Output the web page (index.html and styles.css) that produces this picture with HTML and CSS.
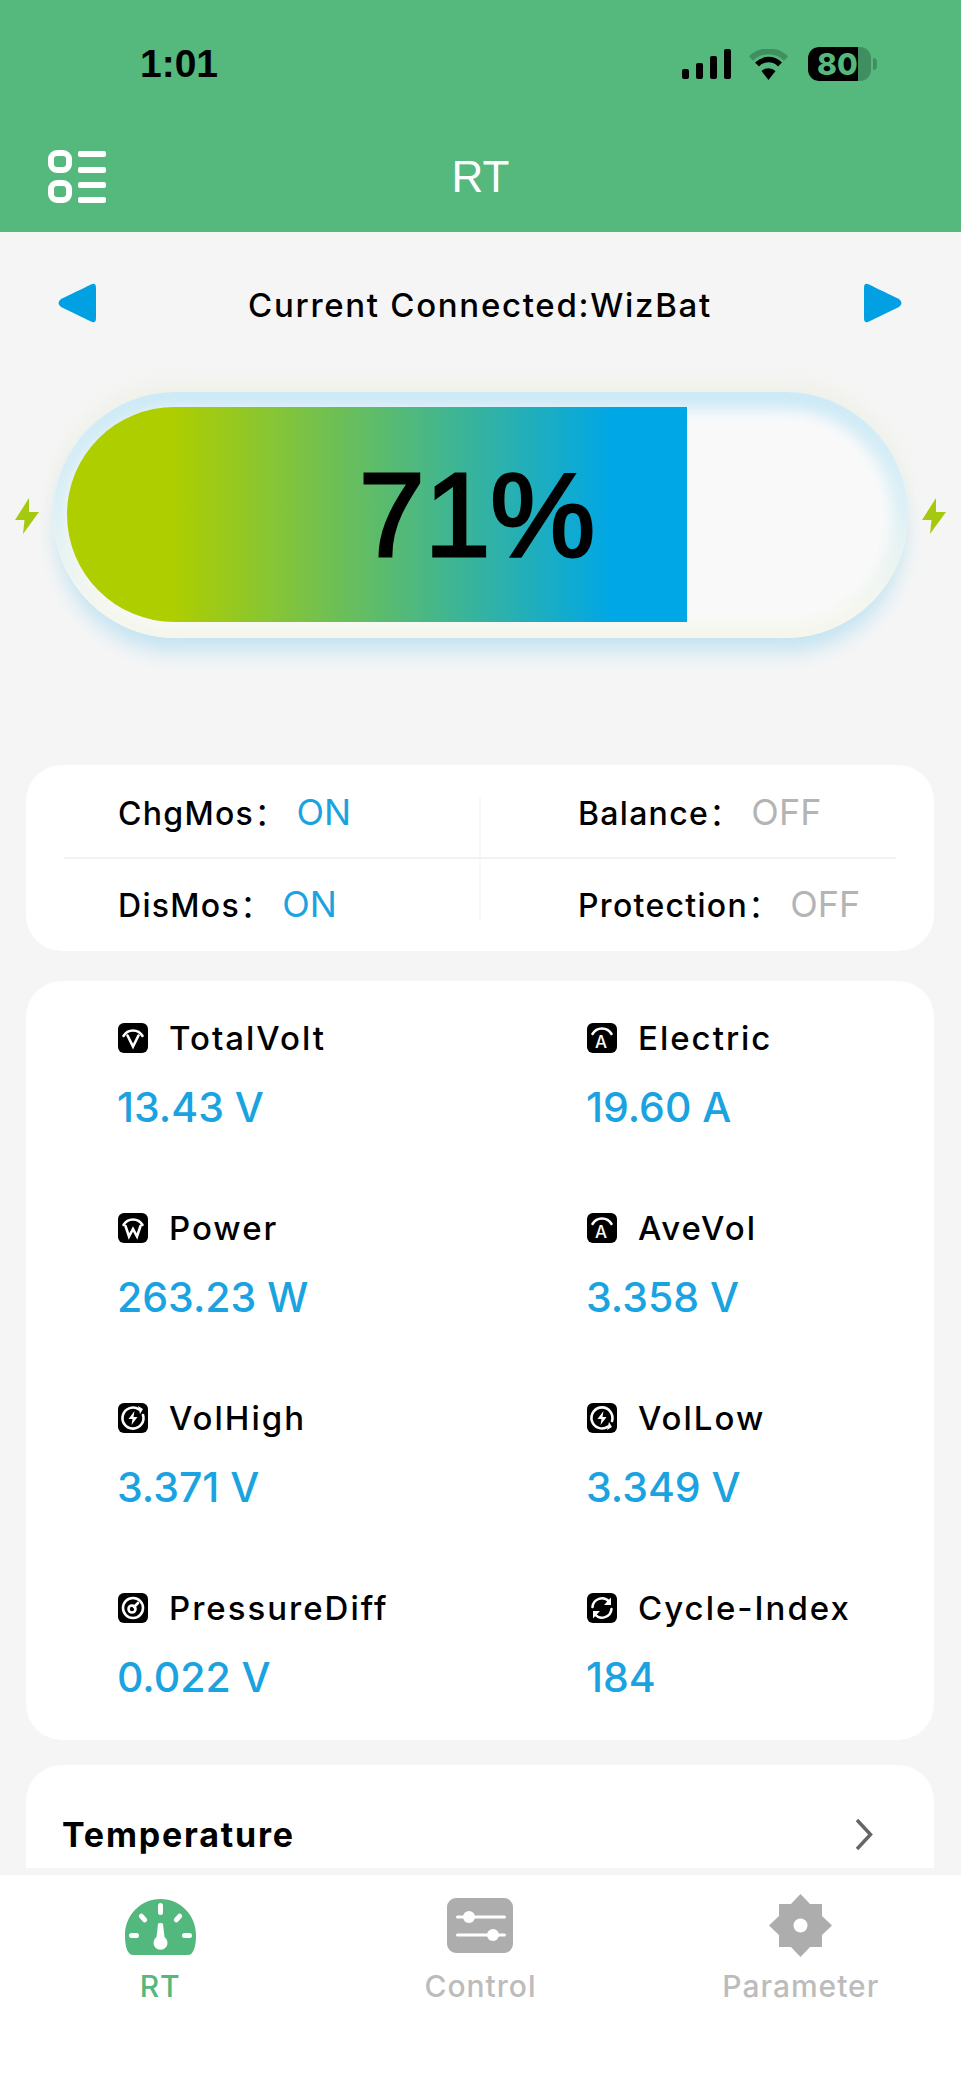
FILE: index.html
```html
<!DOCTYPE html>
<html lang="en">
<head>
<meta charset="utf-8">
<title>RT</title>
<link rel="stylesheet" href="styles.css">
</head>
<body>
<div class="app">
  <header class="header">
    <div class="status">
      <span class="time">1:01</span>
      <div class="status-icons">
        <svg class="ic-signal" viewBox="0 0 49 30"><rect x="0" y="20" width="7" height="10" rx="2"/><rect x="14" y="14" width="7" height="16" rx="2"/><rect x="28" y="7" width="7" height="23" rx="2"/><rect x="42" y="0" width="7" height="30" rx="2"/></svg>
        <svg class="ic-wifi" viewBox="0 0 41 31"><path d="M3 9.500 A25 25 0 0 1 38 9.500" fill="none" stroke="#3f8f60" stroke-width="6"/><path d="M9 15.500 A16 16 0 0 1 32 15.500" fill="none" stroke="#000" stroke-width="5.500"/><path d="M13.500 22 L20.500 31 L27.500 22 A10 10 0 0 0 13.500 22Z" fill="#000"/></svg>
        <div class="batt"><div class="batt-body"><span class="batt-fill"><span class="batt-num">80</span></span></div><span class="batt-nub"></span></div>
      </div>
    </div>
    <div class="nav">
      <svg class="ic-menu" viewBox="0 0 58 53"><g fill="none" stroke="#fff" stroke-width="6"><rect x="3" y="3" width="18" height="17" rx="6"/><rect x="3" y="33" width="18" height="17" rx="6"/></g><g fill="#fff"><rect x="30" y="1" width="28" height="6" rx="2"/><rect x="30" y="17" width="28" height="6" rx="2"/><rect x="30" y="32" width="28" height="6" rx="2"/><rect x="30" y="47" width="28" height="6" rx="2"/></g></svg>
      <span class="nav-title">RT</span>
    </div>
  </header>

  <main class="main">
    <div class="connect">
      <svg class="arrow" viewBox="0 0 38 40"><path d="M33 1.500 Q38 -1 38 5 V35 Q38 41 33 38.500 Q28 36 3 24 Q-2 20 3 16 Q28 4 33 1.500Z"/></svg>
      <span class="connect-text">Current Connected:WizBat</span>
      <svg class="arrow" viewBox="0 0 38 40"><path d="M5 1.500 Q0 -1 0 5 V35 Q0 41 5 38.500 Q10 36 35 24 Q40 20 35 16 Q10 4 5 1.500Z"/></svg>
    </div>

    <div class="gauge">
      <svg class="bolt" viewBox="0 0 24 36"><path d="M14 0 L0 22 H9.500 L8 36 L24 14 H14Z"/></svg>
      <div class="capsule">
        <div class="fill"></div>
        <span class="percent">71%</span>
      </div>
      <svg class="bolt" viewBox="0 0 24 36"><path d="M14 0 L0 22 H9.500 L8 36 L24 14 H14Z"/></svg>
    </div>

    <section class="card switches">
      <div class="sw-row">
        <div class="sw">ChgMos<span class="colon">：</span><span class="on">ON</span></div>
        <div class="sw">Balance<span class="colon">：</span><span class="off">OFF</span></div>
      </div>
      <div class="sw-row sw-row-last">
        <div class="sw">DisMos<span class="colon">：</span><span class="on">ON</span></div>
        <div class="sw">Protection<span class="colon">：</span><span class="off">OFF</span></div>
      </div>
    </section>

    <section class="card metrics">
      <div class="metric">
        <div class="m-label"><svg class="m-ic" viewBox="0 0 30 30"><rect width="30" height="30" rx="6"/><path d="M5.500 13 A11 11 0 0 1 24.500 13" class="w"/><path d="M9.500 12.500 L15 23.500 L20.500 12.500" class="w"/></svg>TotalVolt</div>
        <div class="m-value">13.43 V</div>
      </div>
      <div class="metric">
        <div class="m-label"><svg class="m-ic" viewBox="0 0 30 30"><rect width="30" height="30" rx="6"/><path d="M5.500 11 A11 11 0 0 1 24.500 11" class="w"/><text x="15" y="25" class="m-ic-text">A</text></svg>Electric</div>
        <div class="m-value">19.60 A</div>
      </div>
      <div class="metric">
        <div class="m-label"><svg class="m-ic" viewBox="0 0 30 30"><rect width="30" height="30" rx="6"/><path d="M5.500 12 A11 11 0 0 1 24.500 12" class="w"/><path d="M7.500 13 L11 23.500 L15 16 L19 23.500 L22.500 13" class="w"/></svg>Power</div>
        <div class="m-value">263.23 W</div>
      </div>
      <div class="metric">
        <div class="m-label"><svg class="m-ic" viewBox="0 0 30 30"><rect width="30" height="30" rx="6"/><path d="M5.500 11 A11 11 0 0 1 24.500 11" class="w"/><text x="15" y="25" class="m-ic-text">A</text></svg>AveVol</div>
        <div class="m-value">3.358 V</div>
      </div>
      <div class="metric">
        <div class="m-label"><svg class="m-ic" viewBox="0 0 30 30"><rect width="30" height="30" rx="6"/><path d="M21 6.500 A10.500 10.500 0 1 0 25 12" class="w"/><path d="M20 3 L25 6 L22 11" class="wf"/><path d="M16.500 8 L10.500 16 H14.500 L13.500 22 L19.500 14 H15.500Z" class="wf"/></svg>VolHigh</div>
        <div class="m-value">3.371 V</div>
      </div>
      <div class="metric">
        <div class="m-label"><svg class="m-ic" viewBox="0 0 30 30"><rect width="30" height="30" rx="6"/><path d="M21 23.500 A10.500 10.500 0 1 1 25 18" class="w"/><path d="M20 27 L25 24 L22 19" class="wf"/><path d="M16.500 8 L10.500 16 H14.500 L13.500 22 L19.500 14 H15.500Z" class="wf"/></svg>VolLow</div>
        <div class="m-value">3.349 V</div>
      </div>
      <div class="metric">
        <div class="m-label"><svg class="m-ic" viewBox="0 0 30 30"><rect width="30" height="30" rx="6"/><circle cx="15" cy="15" r="10" class="w"/><circle cx="14" cy="16" r="3.500" class="w"/><path d="M16 14 L20 10" class="w"/></svg>PressureDiff</div>
        <div class="m-value">0.022 V</div>
      </div>
      <div class="metric">
        <div class="m-label"><svg class="m-ic" viewBox="0 0 30 30"><rect width="30" height="30" rx="6"/><path d="M5.500 14 A9.500 9.500 0 0 1 22 8.500" class="w"/><path d="M24.500 16 A9.500 9.500 0 0 1 8 21.500" class="w"/><path d="M24 4.500 V12 H17Z" class="wf"/><path d="M6 25.500 V18 H13Z" class="wf"/></svg>Cycle-Index</div>
        <div class="m-value">184</div>
      </div>
    </section>

    <section class="card temp">
      <span class="temp-title">Temperature</span>
      <svg class="chev" viewBox="0 0 18 33"><path d="M2 2 L15.500 16.500 L2 31"/></svg>
    </section>
  </main>

  <nav class="tabbar">
    <div class="tab tab-active">
      <svg class="tab-ic" viewBox="0 0 71 56"><path class="tab-green" d="M35.500 0 C55 0 71 16 71 36 C71 44 70 50 67 54 Q66 56 63 56 H8 Q5 56 4 54 C1 50 0 44 0 36 C0 16 16 0 35.500 0Z"/><g class="tab-cut"><rect x="33" y="4" width="5" height="12" rx="2.500"/><rect x="-2.500" y="-5" width="5" height="10" rx="2.500" transform="translate(18 19) rotate(-42)"/><rect x="-2.500" y="-5" width="5" height="10" rx="2.500" transform="translate(53 19) rotate(42)"/><rect x="4" y="34" width="10" height="5" rx="2.500"/><rect x="57" y="34" width="10" height="5" rx="2.500"/><path d="M33 25 Q33 24 35.500 24 Q38 24 38 25 L39.500 38 A7 7 0 1 1 31.500 38Z"/></g></svg>
      <span>RT</span>
    </div>
    <div class="tab">
      <svg class="tab-ic" viewBox="0 0 66 55"><rect class="tab-gray" width="66" height="55" rx="9"/><g class="tab-cut"><rect x="9" y="17.500" width="50" height="3" rx="1.500"/><rect x="9" y="35.500" width="50" height="3" rx="1.500"/><circle cx="22" cy="19" r="6"/><circle cx="46" cy="37" r="6"/></g></svg>
      <span>Control</span>
    </div>
    <div class="tab">
      <svg class="tab-ic tab-ic-gear" viewBox="0 0 63 63"><path class="tab-gray" d="M31.500 0 L41 10 H53 V22 L63 31.500 L53 41 V53 H41 L31.500 63 L22 53 H10 V41 L0 31.500 L10 22 V10 H22Z"/><circle class="tab-cut" cx="31.500" cy="31.500" r="7"/></svg>
      <span>Parameter</span>
    </div>
  </nav>
</div>
</body>
</html>
```

FILE: styles.css
```css
* { box-sizing: border-box; }
html, body { margin: 0; padding: 0; }
body { background: #f5f5f5; font-family: Inter, "Liberation Sans", sans-serif; color: #000; }
.app { width: 961px; height: 2081px; display: flex; flex-direction: column; overflow: hidden; }

.header { height: 232px; background: #55b87c; flex: none; }
.status { height: 150px; padding: 47px 84px 0 140px; display: flex; justify-content: space-between; align-items: flex-start; }
.time { font-family: "Liberation Sans", sans-serif; font-size: 39px; line-height: 34px; font-weight: 700; }
.status-icons { display: flex; align-items: center; }
.ic-signal { width: 49px; height: 30px; fill: #000; margin-right: 17px; }
.ic-wifi { width: 41px; height: 31px; margin-right: 19px; }
.batt { display: flex; align-items: center; }
.batt-body { width: 63px; height: 34px; border-radius: 11px; background: #3f8f60; overflow: hidden; }
.batt-fill { display: block; width: 50px; height: 34px; background: #000; border-radius: 11px 0 0 11px; padding-left: 9px; }
.batt-num { color: #55b87c; font-size: 30px; line-height: 34px; font-weight: 800; white-space: nowrap; }
.batt-nub { width: 4px; height: 12px; margin-left: 2px; background: #3f8f60; border-radius: 0 4px 4px 0; }
.nav { height: 53px; padding-left: 48px; display: flex; align-items: center; position: relative; }
.ic-menu { width: 58px; height: 53px; }
.nav-title { position: absolute; left: 0; right: 0; text-align: center; color: #fff; font-family: "Liberation Sans", sans-serif; font-size: 44px; line-height: 53px; }

.main { flex: 1; min-height: 0; padding: 0 27px 0 26px; overflow: hidden; }
.connect { height: 91px; padding: 51px 59px 0 58px; margin: 0 -27px 0 -26px; display: flex; justify-content: space-between; align-items: flex-start; }
.arrow { width: 38px; height: 40px; fill: #00a0e3; flex: none; }
.connect-text { font-size: 33px; line-height: 44px; font-weight: 500; letter-spacing: 1.700px; white-space: nowrap; }

.gauge { margin: 69px -27px 0 -26px; height: 246px; padding: 0 15px 0 15px; display: flex; align-items: center; justify-content: space-between; }
.bolt { width: 24px; height: 36px; fill: #a5c90f; flex: none; margin-top: 2px; }
.capsule { width: 855px; height: 246px; border-radius: 123px; position: relative; padding: 15px 14px; background: linear-gradient(180deg, #cdeaf7 0%, #dcf0f6 45%, #f5f7ee 88%); box-shadow: 0 18px 20px -4px #c4e4f3, 0 -10px 18px #eff1e8; }
.capsule::before { content: ""; position: absolute; inset: 18px 16px 15px; border-radius: 108px; background: #f9f9f9; filter: blur(7px); }
.fill { position: relative; width: 620px; height: 215px; border-radius: 108px 0 0 108px; background: linear-gradient(90deg, #aece00 17%, #00a7e6 88%); }
.percent { position: absolute; left: 306px; top: 65px; font-family: "Liberation Sans", sans-serif; font-size: 118px; line-height: 117px; -webkit-text-stroke: 3px #000; }

.card { background: #fff; border-radius: 36px; }
.switches { margin-top: 127px; height: 186px; padding: 32px 38px 0; }
.sw-row { display: flex; height: 62px; border-bottom: 2px solid #f2f2f2; }
.sw-row-last { border-bottom: 0; height: 62px; }
.sw { font-size: 32px; line-height: 28px; font-weight: 500; white-space: nowrap; letter-spacing: 1.300px; }
.sw:first-child { width: 417px; padding-left: 54px; border-right: 2px solid #f8f8f8; }
.sw:last-child { width: 415px; padding-left: 97px; }
.sw-row-last .sw { padding-top: 30px; }
.colon { font-family: "Noto Sans CJK SC", sans-serif; font-size: 32px; font-weight: 400; margin-right: 9px; }
.on { color: #1aa3e0; font-weight: 400; font-size: 36px; letter-spacing: 0; }
.off { color: #b4b4b4; font-weight: 400; font-size: 36px; letter-spacing: 0; }

.metrics { margin-top: 30px; height: 759px; padding: 41px 0 0 92px; display: grid; grid-template-columns: 469px 1fr; grid-auto-rows: 190px; }
.m-label { display: flex; align-items: center; font-size: 33px; line-height: 32px; font-weight: 500; letter-spacing: 2px; }
.m-ic { width: 30px; height: 30px; margin-right: 21px; fill: #000; flex: none; }
.m-ic .w { fill: none; stroke: #fff; stroke-width: 2.600; stroke-linecap: round; }
.m-ic .wf { fill: #fff; }
.m-ic-text { font-size: 17px; text-anchor: middle; fill: #fff; font-weight: 500; }
.m-value { margin-top: 33px; margin-left: -1px; font-size: 41px; line-height: 40px; font-weight: 500; color: #1aa3e0; }

.temp { margin-top: 25px; height: 103px; border-radius: 36px 36px 0 0; padding: 50px 61px 0 36px; display: flex; justify-content: space-between; align-items: flex-start; }
.temp-title { font-size: 34px; line-height: 40px; font-weight: 700; letter-spacing: 1.800px; }
.chev { width: 18px; height: 33px; fill: none; stroke: #666; stroke-width: 3.500; margin-top: 3px; }

.tabbar { height: 206px; flex: none; background: #fff; display: grid; grid-template-columns: repeat(3, 320.33px); }
.tab { display: flex; flex-direction: column; align-items: center; padding-top: 23px; color: #bcbcbc; font-size: 30px; line-height: 36px; font-weight: 500; letter-spacing: 1px; }
.tab-active { color: #55b87c; }
.tab-ic { width: 66px; height: 55px; margin-bottom: 15px; }
.tab-active .tab-ic { width: 71px; height: 56px; margin-top: 1px; margin-bottom: 13px; }
.tab-ic-gear { width: 63px; height: 63px; margin-top: -4px; margin-bottom: 11px; }
.tab-green { fill: #52b87d; }
.tab-gray { fill: #adadad; }
.tab-cut { fill: #fff; }
```
